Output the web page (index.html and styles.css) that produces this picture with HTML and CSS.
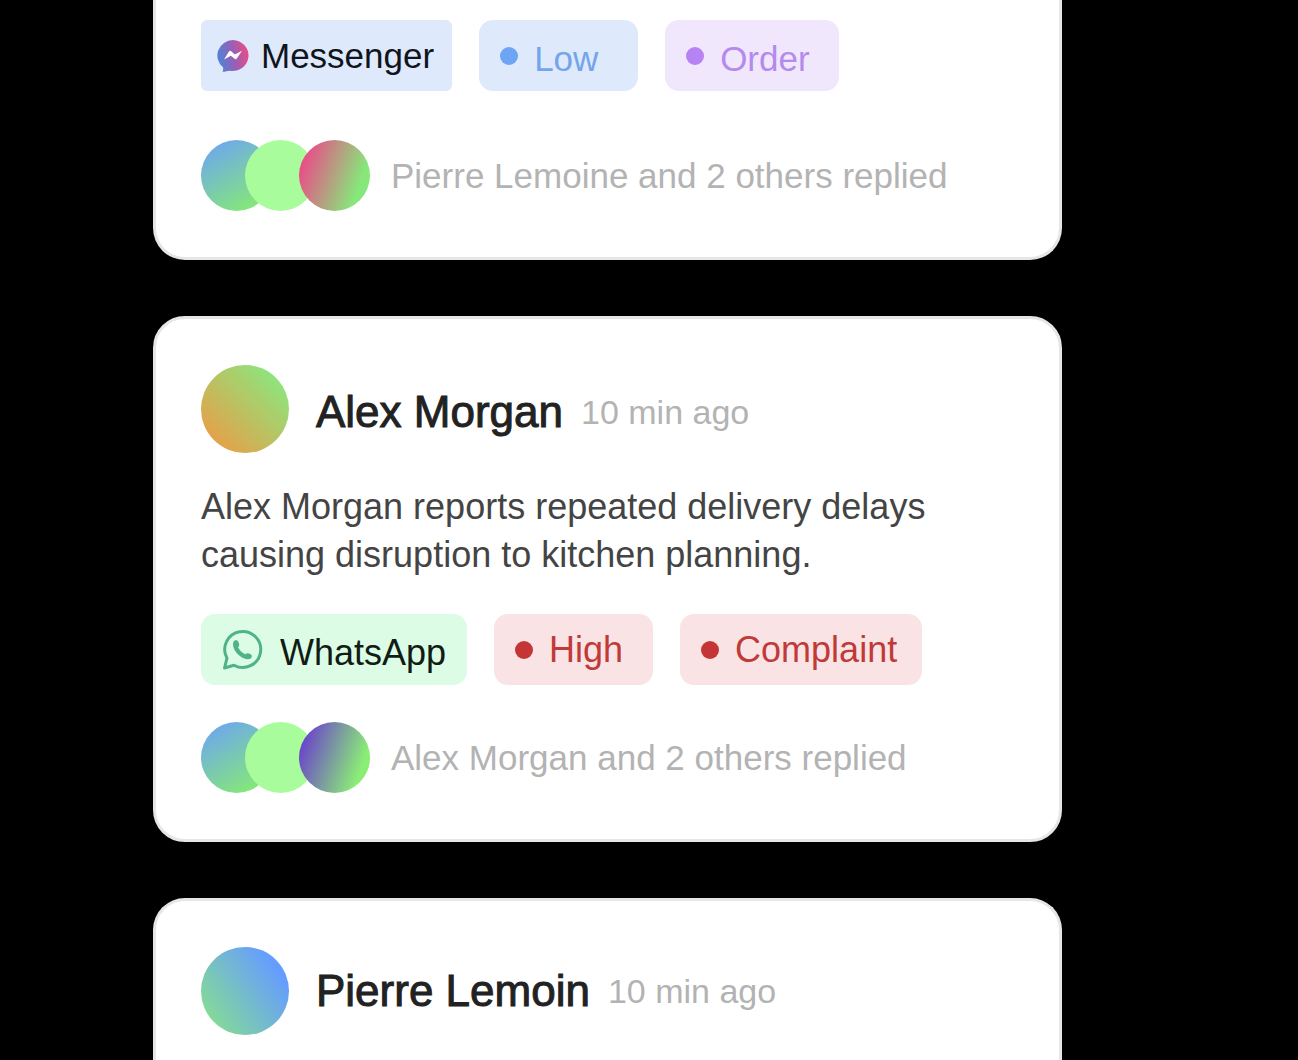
FILE: index.html
```html
<!DOCTYPE html>
<html lang="en">
<head>
<meta charset="utf-8">
<meta name="viewport" content="width=device-width, initial-scale=1">
<title>Inbox</title>
<link rel="stylesheet" href="styles.css">
</head>
<body>
<main class="feed">
  <article class="card card-first">
    <div class="tags">
      <span class="tag tag-messenger">
        <svg width="32" height="34" viewBox="0 0 32 34" aria-hidden="true">
          <defs>
            <linearGradient id="messenger-fill" x1="0" y1="0.6" x2="1" y2="0.4">
              <stop offset="0" stop-color="#4a86d8"/>
              <stop offset="0.5" stop-color="#9560b8"/>
              <stop offset="0.9" stop-color="#dc508f"/>
            </linearGradient>
          </defs>
          <path fill="url(#messenger-fill)" d="M16 1a16 15.500 0 1 1-3 30.800C10 32 8 33 5.500 32.800c.8-1.500.8-3 .5-4.500A16 15.500 0 0 1 16 1Z"/>
          <path fill="#fff" d="M7 20.500 12 12.500q1-1.200 2.200-.3l3.600 3.200 7.200-3.600-5.200 7.700q-1 1.200-2.200.3l-3.800-3.100Z"/>
        </svg>
        <span>Messenger</span>
      </span>
      <span class="tag tag-status tag-low"><i class="dot"></i><span class="lowered">Low</span></span>
      <span class="tag tag-status tag-order"><i class="dot"></i><span class="lowered">Order</span></span>
    </div>
    <footer class="replies">
      <div class="stack"><i class="face face-blue"></i><i class="face face-green"></i><i class="face face-pink"></i></div>
      <span>Pierre Lemoine and 2 others replied</span>
    </footer>
  </article>

  <article class="card">
    <header class="author">
      <i class="avatar avatar-amber"></i>
      <h2 class="name lowered">Alex Morgan</h2>
      <time class="time lowered">10 min ago</time>
    </header>
    <p class="summary">Alex Morgan reports repeated delivery delays causing disruption to kitchen planning.</p>
    <div class="tags tags-large">
      <span class="tag tag-whatsapp">
        <svg width="41" height="41" viewBox="0 0 41 41" aria-hidden="true">
          <path fill="none" stroke="#4fb38a" stroke-width="3" stroke-linejoin="round" d="M2.500 39 5 29.200A18 18 0 1 1 12 36.200Z"/>
          <path fill="#4fb38a" d="M11.600 12.600c1-1.800 3.700-1.900 4.600 0l.9 2.300c.4 1.300-.1 2.400-1 3.300 1.600 3.300 4 5.600 7.200 7 1.200-1 2.300-1.300 3.500-.8l1.800.8c1.900.9 1.700 3.300 0 4.300-2.800 1.500-7.200.4-11-2.700-4.200-3.400-6.900-8.400-6.500-12.400Z"/>
        </svg>
        <span class="lowered">WhatsApp</span>
      </span>
      <span class="tag tag-status tag-alert"><i class="dot"></i><span>High</span></span>
      <span class="tag tag-status tag-alert"><i class="dot"></i><span>Complaint</span></span>
    </div>
    <footer class="replies">
      <div class="stack"><i class="face face-blue"></i><i class="face face-green"></i><i class="face face-violet"></i></div>
      <span>Alex Morgan and 2 others replied</span>
    </footer>
  </article>

  <article class="card card-last">
    <header class="author">
      <i class="avatar avatar-sky"></i>
      <h2 class="name">Pierre Lemoin</h2>
      <time class="time">10 min ago</time>
    </header>
  </article>
</main>
</body>
</html>
```
FILE: styles.css
```css
* {
  box-sizing: border-box;
}

body {
  margin: 0;
  background: #000;
  color: #222;
  font-family: "Liberation Sans", Arial, sans-serif;
}

.feed {
  display: flex;
  flex-direction: column;
  gap: 56px;
  padding: 0 236px 0 153px;
}

.card {
  padding: 46px 45px;
  background: #fff;
  border: 3px solid #e6e6e6;
  border-radius: 32px;
}

.card-first {
  padding-top: 20px;
  border-top: 0;
  border-top-left-radius: 0;
  border-top-right-radius: 0;
}

.card-first .replies {
  margin-top: 49px;
}

.card-last {
  padding-bottom: 25px;
  border-bottom: 0;
  border-bottom-left-radius: 0;
  border-bottom-right-radius: 0;
}

.author {
  display: flex;
  align-items: center;
}

.avatar {
  flex: none;
  width: 88px;
  height: 88px;
  margin-right: 27px;
  border-radius: 50%;
}

.avatar-amber {
  background: linear-gradient(45deg, #e6a048 12%, #8fe37c 85%);
}

.avatar-sky {
  background: linear-gradient(55deg, #86dc93 10%, #659dff 82%);
}

.name {
  margin: 0 18px 0 0;
  font-size: 44px;
  font-weight: 400;
  line-height: 48px;
  -webkit-text-stroke: 1px currentColor;
}

.time {
  color: #b3b3b3;
  font-size: 34px;
  line-height: 48px;
}

.summary {
  margin: 30px 0 0;
  color: #444;
  font-size: 36px;
  line-height: 48px;
}

.tags {
  display: flex;
  gap: 27px;
  font-size: 35px;
}

.tags-large {
  margin-top: 35px;
  font-size: 36px;
}

.tag {
  display: flex;
  align-items: center;
  height: 71px;
  border-radius: 14px;
  line-height: 48px;
}

.lowered {
  padding-top: 6px;
}

.tag-messenger {
  gap: 12px;
  padding: 0 18px 0 16px;
  border-radius: 6px;
  background: #dfe9fc;
  color: #10151c;
}

.tag-whatsapp {
  gap: 17px;
  padding: 0 21px;
  background: #dcfce6;
  color: #101c14;
}

.tag-status {
  gap: 16px;
  min-width: 159px;
  padding: 0 25px 0 21px;
}

.dot {
  width: 18px;
  height: 18px;
  border-radius: 50%;
}

.tag-low {
  background: #dfe9fc;
  color: #74a5ea;
}

.tag-low .dot {
  background: #6ea4f4;
}

.tag-order {
  min-width: 174px;
  background: #f0e7fd;
  color: #b48aec;
}

.tag-order .dot {
  background: #b682f4;
}

.tag-alert {
  background: #fae3e4;
  color: #bf3a38;
}

.tag-alert .dot {
  background: #c43535;
}

.replies {
  display: flex;
  align-items: center;
  gap: 21px;
  margin-top: 37px;
  color: #b3b3b3;
  font-size: 35px;
  line-height: 48px;
}

.stack {
  display: flex;
}

.face {
  width: 71px;
  height: 71px;
  border-radius: 50%;
}

.face-blue {
  background: linear-gradient(150deg, #6ea8ec 10%, #84e67c 85%);
}

.face-green {
  margin-left: -27px;
  background: #a9fc9b;
}

.face-pink {
  margin-left: -17px;
  background: linear-gradient(110deg, #ec4a88 10%, #86e87a 80%);
}

.face-violet {
  margin-left: -17px;
  background: linear-gradient(110deg, #6c48c8 12%, #8aee76 82%);
}
```
